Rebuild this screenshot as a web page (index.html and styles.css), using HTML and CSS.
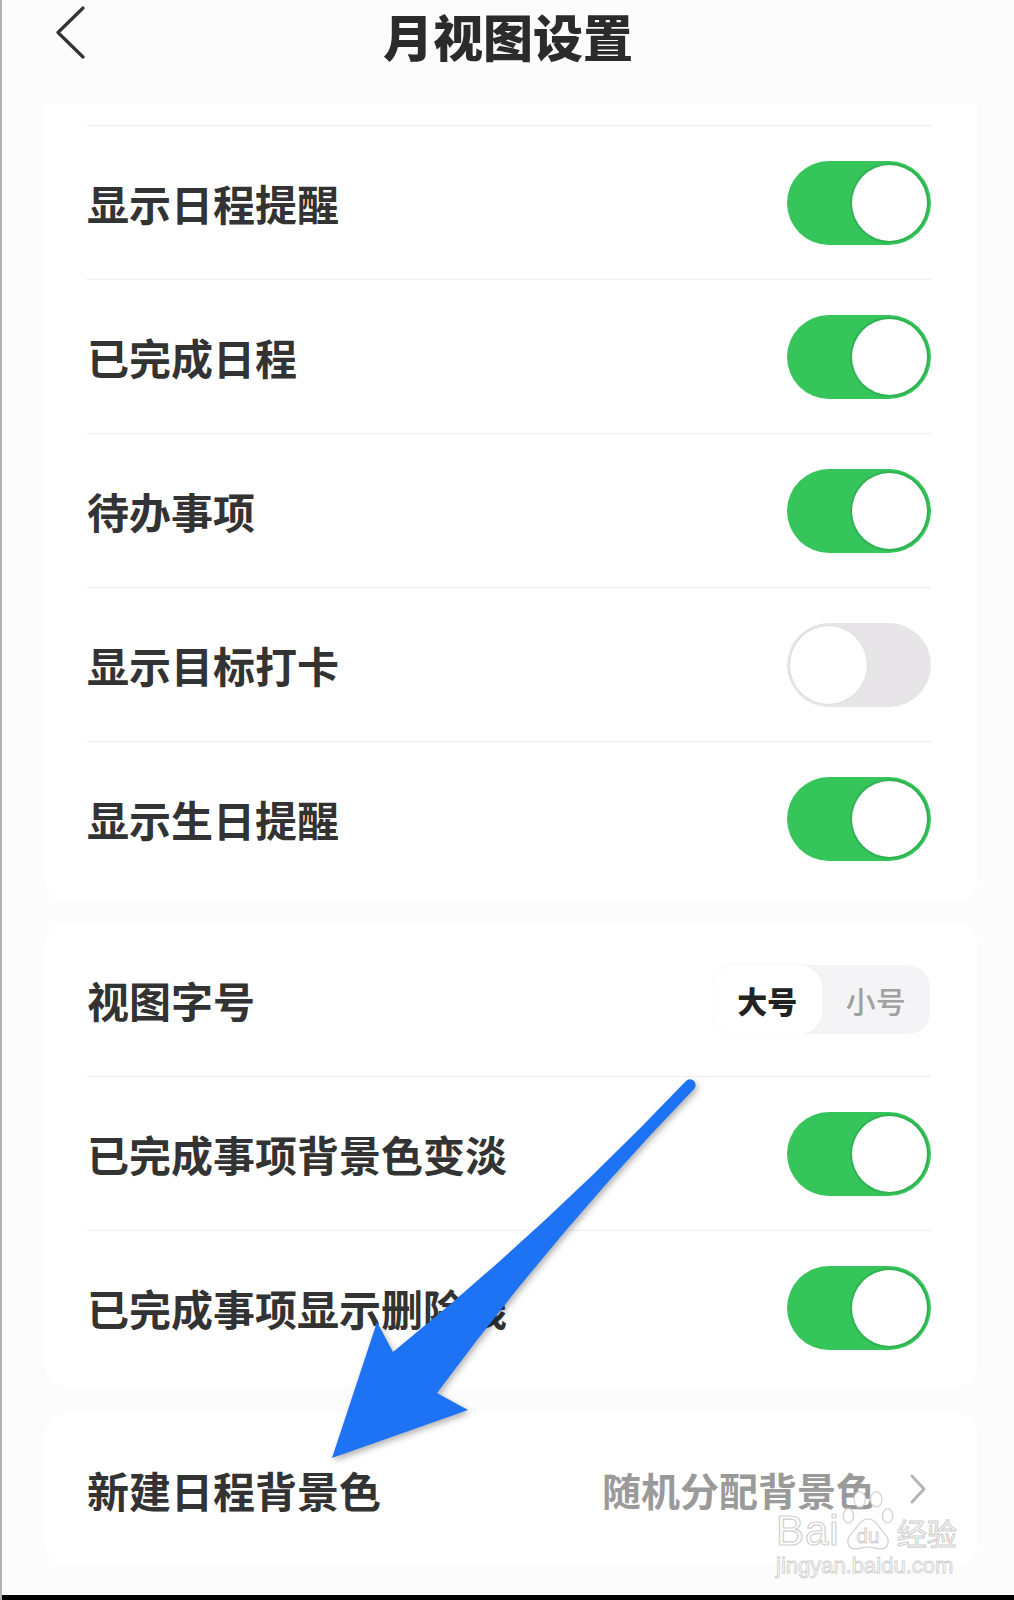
FILE: index.html
```html
<!DOCTYPE html>
<html lang="zh-CN">
<head>
    <meta charset="UTF-8">
    <meta name="viewport" content="width=device-width, initial-scale=1.0">
    <title>月视图设置</title>
    <link rel="stylesheet" href="styles.css">
</head>
<body>
    <div class="screen">
        <header class="nav">
            <div class="nav-left">
                <svg class="back" width="32" height="58" viewBox="0 0 32 58">
                    <polyline points="28,2 3,26.5 28,51" fill="none" stroke="#333" stroke-width="3.2" stroke-linecap="round" stroke-linejoin="round"/>
                </svg>
            </div>
            <h1 class="title">月视图设置</h1>
            <div></div>
        </header>

        <main class="content">
            <section class="card card-top">
                <div class="row">
                    <span class="label">显示日程提醒</span>
                    <span class="switch on"><span class="knob"></span></span>
                </div>
                <div class="row">
                    <span class="label">已完成日程</span>
                    <span class="switch on"><span class="knob"></span></span>
                </div>
                <div class="row">
                    <span class="label">待办事项</span>
                    <span class="switch on"><span class="knob"></span></span>
                </div>
                <div class="row">
                    <span class="label">显示目标打卡</span>
                    <span class="switch"><span class="knob"></span></span>
                </div>
                <div class="row">
                    <span class="label">显示生日提醒</span>
                    <span class="switch on"><span class="knob"></span></span>
                </div>
            </section>

            <section class="card card-mid">
                <div class="row first">
                    <span class="label">视图字号</span>
                    <div class="seg">
                        <span class="seg-item active">大号</span>
                        <span class="seg-item">小号</span>
                    </div>
                </div>
                <div class="row">
                    <span class="label">已完成事项背景色变淡</span>
                    <span class="switch on"><span class="knob"></span></span>
                </div>
                <div class="row">
                    <span class="label">已完成事项显示删除线</span>
                    <span class="switch on"><span class="knob"></span></span>
                </div>
            </section>

            <section class="card card-last">
                <div class="row first single">
                    <span class="label">新建日程背景色</span>
                    <span class="value">随机分配背景色
                        <svg class="chevron" width="18" height="32" viewBox="0 0 18 32">
                            <polyline points="3,3 15,16 3,29" fill="none" stroke="#b5b5b5" stroke-width="3" stroke-linecap="round" stroke-linejoin="round"/>
                        </svg>
                    </span>
                </div>
            </section>
        </main>

        <div class="bottom-bar"></div>

        <svg class="arrow" width="1014" height="1600" viewBox="0 0 1014 1600">
            <path d="M686 1081 Q548 1226 393 1352 L377 1322 L332 1458 L468 1410 L437 1393 Q556 1232 694 1089 A5.5 5.5 0 0 0 686 1081 Z" fill="#1d73f3"/>
        </svg>

        <div class="watermark">
            <div class="wm-line">
                <span class="wm-bai">Bai</span>
                <svg class="paw" width="54" height="62" viewBox="0 0 52 60">
                    <g fill="#fff" stroke="#d4d4d4" stroke-width="1.3">
                        <ellipse cx="7" cy="25" rx="5" ry="7"/>
                        <ellipse cx="18" cy="9" rx="5.5" ry="7.5"/>
                        <ellipse cx="34" cy="9" rx="5.5" ry="7.5"/>
                        <ellipse cx="45" cy="25" rx="5" ry="7"/>
                        <path d="M26 28 C19 28 16 36 10 42 C4 48 6 57 14 57 C20 57 22 55 26 55 C30 55 32 57 38 57 C46 57 48 48 42 42 C36 36 33 28 26 28 Z"/>
                    </g>
                    <text x="26" y="51" text-anchor="middle" class="paw-text">du</text>
                </svg>
                <span class="wm-jy">经验</span>
            </div>
            <div class="wm-url">jingyan.baidu.com</div>
        </div>
    </div>
</body>
</html>
```

FILE: styles.css
```css
body {
    margin: 0;
    background-color: #fff;
    font-family: "Noto Sans CJK SC", "Noto Sans", sans-serif;
}

.screen {
    position: relative;
    width: 1012px;
    height: 1600px;
    border-left: 2px solid #b2b2b2;
    background-color: #fcfcfd;
    display: flex;
    flex-direction: column;
    overflow: hidden;
}

/* Header */
.nav {
    height: 70px;
    display: grid;
    grid-template-columns: 1fr auto 1fr;
    align-items: center;
}

.nav-left {
    padding-left: 53px;
    display: flex;
    align-items: center;
}

.back {
    display: block;
}

.title {
    margin: 0;
    font-size: 50px;
    line-height: 70px;
    font-weight: 900;
    color: #2b2b2b;
}

/* Cards */
.content {
    flex: 1;
    padding: 34px 37px 0 43px;
    display: flex;
    flex-direction: column;
}

.card {
    background: #fff;
    border-radius: 22px;
    padding: 0 46px 0 42px;
}

.card-top {
    border-radius: 0 0 22px 22px;
    padding-top: 21px;
    padding-bottom: 6px;
}

.card-mid {
    margin-top: 22px;
    padding-bottom: 3px;
}

.card-last {
    margin-top: 26px;
}

.row {
    box-sizing: border-box;
    height: 154px;
    border-top: 1px solid #efeff1;
    display: flex;
    justify-content: space-between;
    align-items: center;
}

.row.first {
    border-top: none;
    height: 153px;
}

.row.single {
    height: 152px;
}

.label {
    font-size: 42px;
    font-weight: 700;
    color: #333;
}

/* Switch */
.switch {
    box-sizing: border-box;
    width: 144px;
    height: 84px;
    border-radius: 42px;
    background-color: #e7e5e8;
    padding: 2px;
    display: flex;
    justify-content: flex-start;
}

.switch.on {
    background-color: #35c55a;
    justify-content: flex-end;
}

.knob {
    box-sizing: border-box;
    width: 79px;
    height: 80px;
    border-radius: 50%;
    background: #fff;
    border: 1px solid #dcdcdc;
}

.switch.on .knob {
    border: 2px solid #2fb252;
}

/* Segmented control */
.seg {
    display: flex;
    height: 69px;
    width: 217px;
    margin-right: 1px;
    border-radius: 22px;
    background-color: #f4f4f6;
}

.seg-item {
    flex: 1;
    display: flex;
    align-items: center;
    justify-content: center;
    font-size: 30px;
    font-weight: 500;
    color: #a0a0a0;
    border-radius: 22px;
}

.seg-item.active {
    background-color: #fff;
    color: #222;
    font-weight: 900;
    box-shadow: 0 0 4px rgba(0, 0, 0, 0.04);
}

/* Value with chevron */
.value {
    display: flex;
    align-items: center;
    gap: 34px;
    font-size: 39px;
    font-weight: 700;
    color: #9a9a9a;
    margin-right: 4px;
}

.chevron {
    display: block;
}

.bottom-bar {
    height: 5px;
    background-color: #000;
}

/* Annotation arrow */
.arrow {
    position: absolute;
    top: 0;
    left: -2px;
    pointer-events: none;
    filter: drop-shadow(2px 3px 3px rgba(0, 0, 0, 0.3));
}

/* Watermark */
.watermark {
    position: absolute;
    left: 774px;
    top: 1490px;
    display: flex;
    flex-direction: column;
    align-items: flex-start;
}

.wm-line {
    display: flex;
    align-items: flex-end;
    height: 62px;
}

.wm-bai {
    font-family: "Liberation Sans", Arial, sans-serif;
    font-size: 42px;
    line-height: 42px;
    color: #fff;
    -webkit-text-stroke: 1.2px #d0d0d0;
    letter-spacing: 1px;
}

.paw {
    display: block;
    margin-left: 1px;
}

.paw-text {
    font-family: "Liberation Sans", Arial, sans-serif;
    font-size: 20px;
    fill: #fff;
    stroke: #cfcfcf;
    stroke-width: 0.9;
}

.wm-jy {
    font-size: 30px;
    line-height: 40px;
    color: #fff;
    -webkit-text-stroke: 1.1px #d0d0d0;
    margin-left: 2px;
}

.wm-url {
    font-family: "Liberation Sans", Arial, sans-serif;
    font-size: 22px;
    line-height: 26px;
    color: #fff;
    -webkit-text-stroke: 0.9px #d0d0d0;
    margin-top: 1px;
}
```
